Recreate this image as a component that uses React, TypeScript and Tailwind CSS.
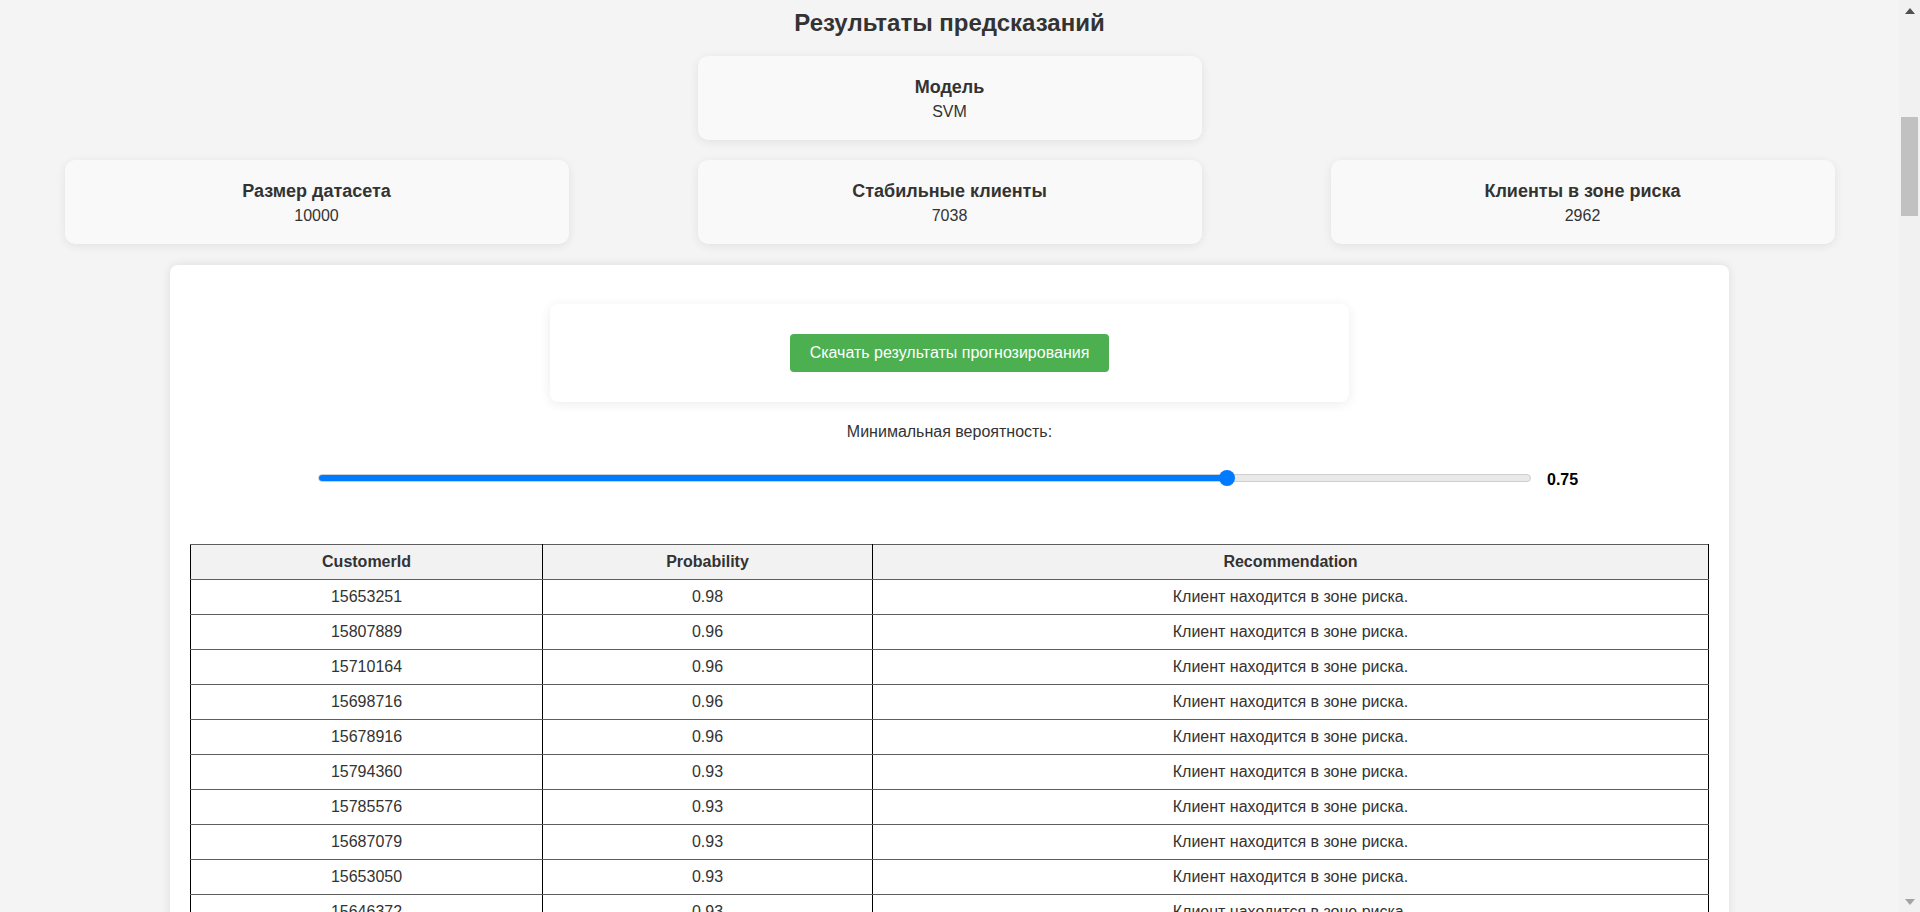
import React from "react";

// Results page for a churn model: summary cards, download panel, threshold slider and table.

type Row = { id: string; p: string; rec: string };

const RISK = "Клиент находится в зоне риска.";

const rows: Row[] = [
  { id: "15653251", p: "0.98", rec: RISK },
  { id: "15807889", p: "0.96", rec: RISK },
  { id: "15710164", p: "0.96", rec: RISK },
  { id: "15698716", p: "0.96", rec: RISK },
  { id: "15678916", p: "0.96", rec: RISK },
  { id: "15794360", p: "0.93", rec: RISK },
  { id: "15785576", p: "0.93", rec: RISK },
  { id: "15687079", p: "0.93", rec: RISK },
  { id: "15653050", p: "0.93", rec: RISK },
  { id: "15646372", p: "0.93", rec: RISK },
  { id: "15701354", p: "0.92", rec: RISK },
  { id: "15737888", p: "0.92", rec: RISK },
];

function StatCard({ label, value }: { label: string; value: string }) {
  return (
    <div className="w-[504px] rounded-[10px] bg-[#f9f9f9] px-5 pb-[18px] pt-5 text-center shadow-[0_2px_10px_rgba(0,0,0,0.08)]">
      <div className="mb-[4px] text-[18px] font-bold leading-[22px]">{label}</div>
      <div className="text-[16px] leading-[20px]">{value}</div>
    </div>
  );
}

function Slider({ value }: { value: number }) {
  return (
    <div className="flex h-[20px] items-center justify-center gap-4">
      <div className="relative h-[8px] w-[1213px] rounded-full border border-[#cfcfcf] bg-[#e9e9e9]">
        <div className="h-full rounded-full bg-[#007bff]" style={{ width: `${value * 100}%` }} />
        <div
          className="absolute top-1/2 h-[16px] w-[16px] -translate-x-1/2 -translate-y-1/2 rounded-full bg-[#007bff]"
          style={{ left: `${value * 100}%` }}
        />
      </div>
      <span className="mt-[3px] w-[34px] text-[16px] font-bold text-black">{value.toFixed(2)}</span>
    </div>
  );
}

function Scrollbar() {
  return (
    <div className="flex w-[21px] shrink-0 flex-col bg-[#f1f1f1]">
      <div className="flex h-[21px] items-center justify-center">
        <svg width="10" height="6" viewBox="0 0 10 6"><path d="M5 0 L10 6 L0 6 Z" fill="#505050" /></svg>
      </div>
      <div className="h-[96px]" />
      <div className="mx-[2px] h-[99px] bg-[#c1c1c1]" />
      <div className="flex-1" />
      <div className="flex h-[21px] items-center justify-center">
        <svg width="10" height="6" viewBox="0 0 10 6"><path d="M0 0 L10 0 L5 6 Z" fill="#a3a3a3" /></svg>
      </div>
    </div>
  );
}

export default function App() {
  const cell = "border-x border-x-black border-y border-y-[#5e5e5e] py-[8px] text-center leading-[18px]";
  return (
    <div
      className="flex h-[912px] overflow-hidden bg-[#f4f4f4] text-[#333]"
      style={{ fontFamily: '"Liberation Sans", Arial, sans-serif' }}
    >
      <div className="flex flex-1 flex-col items-center">
        <h2 className="pt-[8px] text-[24px] font-bold leading-[30px]">Результаты предсказаний</h2>

        <div className="mt-[18px]">
          <StatCard label="Модель" value="SVM" />
        </div>

        <div className="mt-[20px] flex w-full justify-around">
          <StatCard label="Размер датасета" value="10000" />
          <StatCard label="Стабильные клиенты" value="7038" />
          <StatCard label="Клиенты в зоне риска" value="2962" />
        </div>

        <div className="mt-[21px] w-[1559px] rounded-[8px] bg-white px-5 pt-[39px] shadow-[0_0_10px_rgba(0,0,0,0.1)]">
          <div className="mx-auto flex w-[799px] justify-center rounded-[8px] bg-white py-[30px] shadow-[0_2px_12px_rgba(0,0,0,0.08)]">
            <button
              type="button"
              className="h-[38px] rounded-[4px] bg-[#4caf50] px-[20px] text-[16px] text-white"
            >
              Скачать результаты прогнозирования
            </button>
          </div>

          <div className="mt-[21px] text-center text-[16px] leading-[18px]">Минимальная вероятность:</div>

          <div className="mt-[27px]">
            <Slider value={0.75} />
          </div>

          <table className="mt-[56px] w-full border-collapse text-[16px]">
            <thead>
              <tr className="bg-[#f2f2f2]">
                <th className={`${cell} w-[352px] font-bold`}>CustomerId</th>
                <th className={`${cell} w-[330px] font-bold`}>Probability</th>
                <th className={`${cell} font-bold`}>Recommendation</th>
              </tr>
            </thead>
            <tbody>
              {rows.map((r) => (
                <tr key={r.id}>
                  <td className={cell}>{r.id}</td>
                  <td className={cell}>{r.p}</td>
                  <td className={cell}>{r.rec}</td>
                </tr>
              ))}
            </tbody>
          </table>
        </div>
      </div>
      <Scrollbar />
    </div>
  );
}
